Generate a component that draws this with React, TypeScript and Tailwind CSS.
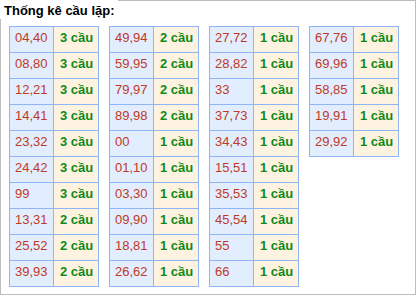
const columns: [string, number][][] = [
  [
    ["04,40", 3], ["08,80", 3], ["12,21", 3], ["14,41", 3], ["23,32", 3],
    ["24,42", 3], ["99", 3], ["13,31", 2], ["25,52", 2], ["39,93", 2],
  ],
  [
    ["49,94", 2], ["59,95", 2], ["79,97", 2], ["89,98", 2], ["00", 1],
    ["01,10", 1], ["03,30", 1], ["09,90", 1], ["18,81", 1], ["26,62", 1],
  ],
  [
    ["27,72", 1], ["28,82", 1], ["33", 1], ["37,73", 1], ["34,43", 1],
    ["15,51", 1], ["35,53", 1], ["45,54", 1], ["55", 1], ["66", 1],
  ],
  [["67,76", 1], ["69,96", 1], ["58,85", 1], ["19,91", 1], ["29,92", 1]],
]

export default function App() {
  return (
    <div className="relative w-[416px] h-[295px] border border-[#bdbdbd] bg-white font-[family-name:'Liberation_Sans',Arial,sans-serif]">
      <div className="absolute -left-px -top-px h-[19px] bg-white pl-[4px] pr-[3px] pt-[3px] text-[13px] font-bold leading-[15px] text-black">
        Thống kê cầu lặp:
      </div>
      <div className="flex items-start gap-[10px] pl-[8px] pt-[25px]">
        {columns.map((rows, i) => (
          <table key={i} className="w-[89px] table-fixed border-collapse text-[13px]">
            <colgroup>
              <col className="w-[44px]" />
              <col className="w-[45px]" />
            </colgroup>
            <tbody>
              {rows.map(([pair, count]) => (
                <tr key={pair} className="h-[26px]">
                  <td className="border border-[#8fb5f5] bg-[#e2edfe] pb-[3px] pl-[5px] text-[#bf3a24]">{pair}</td>
                  <td className="border border-[#8fb5f5] bg-[#fef3e1] pb-[3px] pl-[6px] font-bold text-[#0f8a1a]">{count} cầu</td>
                </tr>
              ))}
            </tbody>
          </table>
        ))}
      </div>
    </div>
  )
}
